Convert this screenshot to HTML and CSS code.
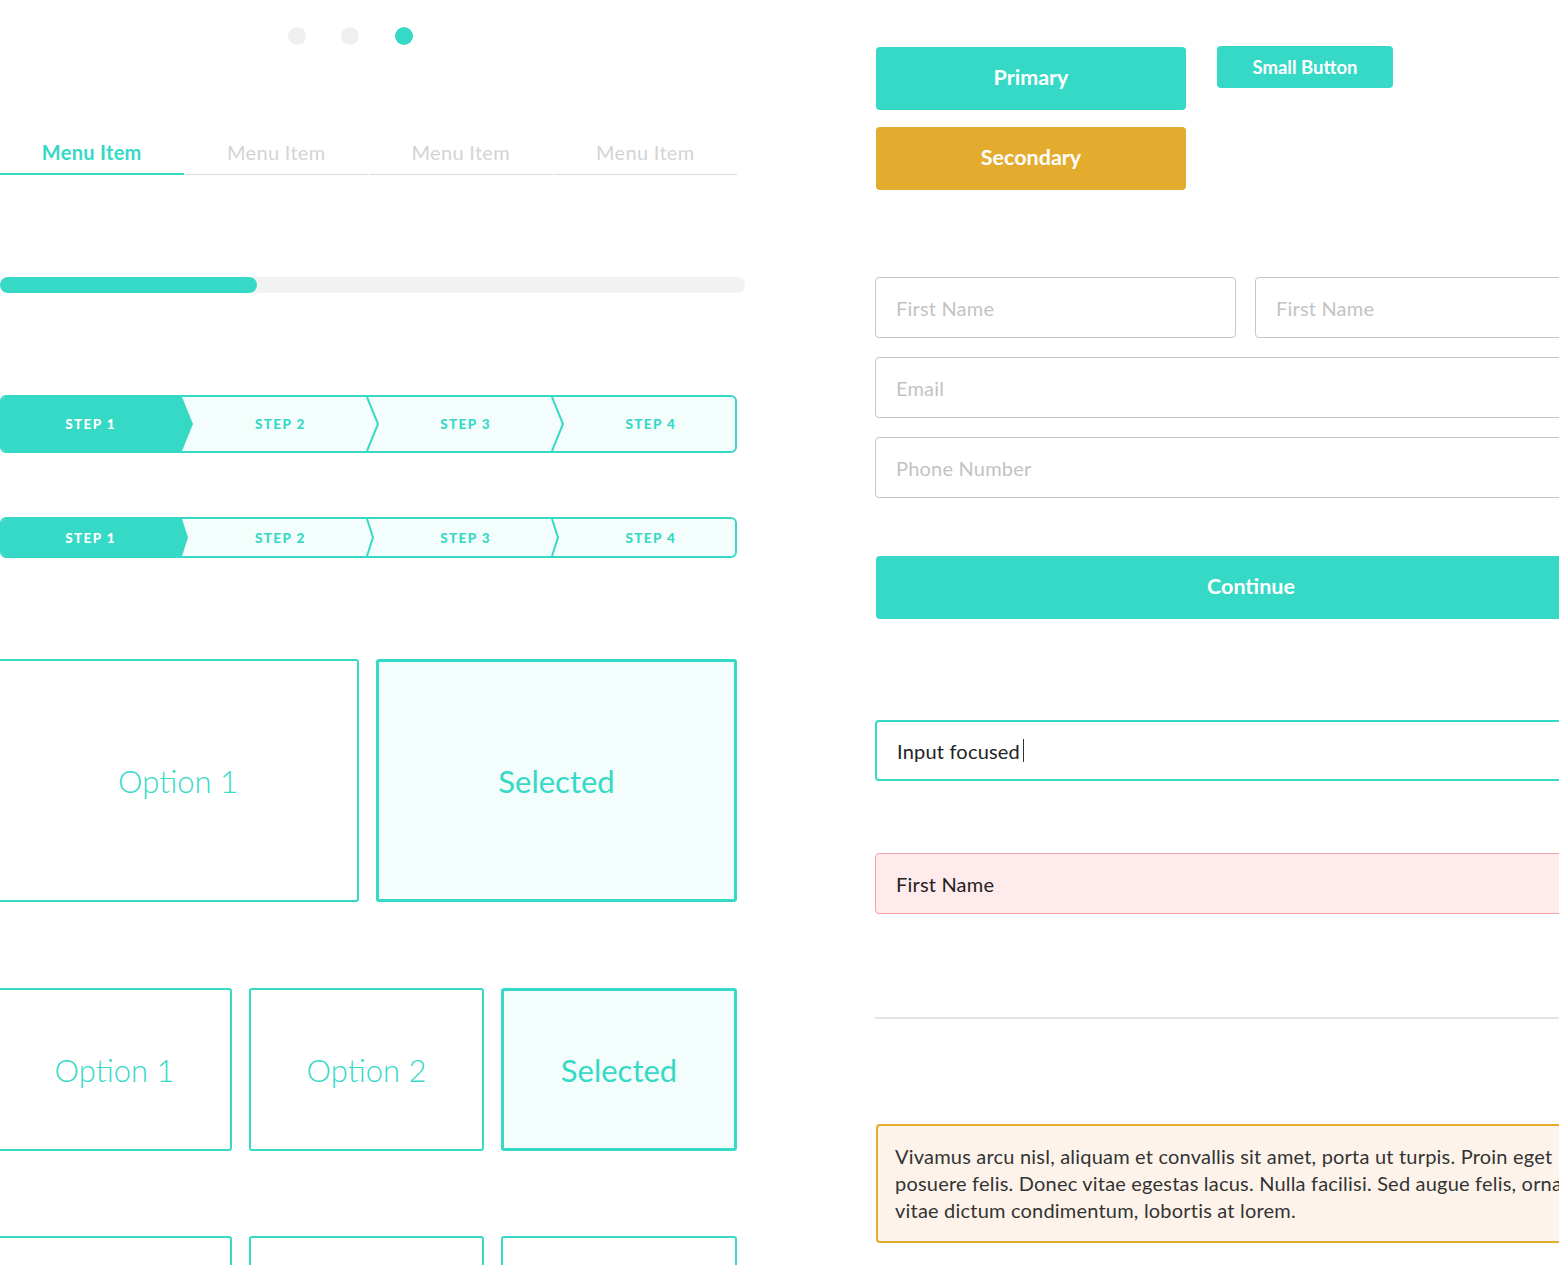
FILE: index.html
```html
<!DOCTYPE html>
<html>
<head>
<meta charset="utf-8">
<link rel="stylesheet" href="styles.css">
</head>
<body>
<div class="canvas">
  <div class="left">
    <div class="dots">
      <span class="dot"></span><span class="dot"></span><span class="dot on"></span>
    </div>
    <nav class="tabs">
      <div class="tab active">Menu Item</div>
      <div class="tab">Menu Item</div>
      <div class="tab">Menu Item</div>
      <div class="tab">Menu Item</div>
    </nav>
    <div class="progress"><div class="fill" style="width:257px"></div></div>

    <div class="steps big">
      <svg class="steps-bg" width="733" height="54" viewBox="0 0 733 54">
        <polygon points="0,0 180,0 191,27 180,54 0,54" fill="#36d9c6"/>
        <polyline points="365,0 376,27 365,54" fill="none" stroke="#36d9c6" stroke-width="2"/>
        <polyline points="550,0 561,27 550,54" fill="none" stroke="#36d9c6" stroke-width="2"/>
      </svg>
      <div class="step current">STEP 1</div>
      <div class="step s2">STEP 2</div>
      <div class="step s3">STEP 3</div>
      <div class="step s4">STEP 4</div>
    </div>

    <div class="steps small">
      <svg class="steps-bg" width="733" height="37" viewBox="0 0 733 37">
        <polygon points="0,0 180,0 186,18.5 180,37 0,37" fill="#36d9c6"/>
        <polyline points="365,0 371,18.5 365,37" fill="none" stroke="#36d9c6" stroke-width="2"/>
        <polyline points="550,0 556,18.5 550,37" fill="none" stroke="#36d9c6" stroke-width="2"/>
      </svg>
      <div class="step current">STEP 1</div>
      <div class="step s2">STEP 2</div>
      <div class="step s3">STEP 3</div>
      <div class="step s4">STEP 4</div>
    </div>

    <div class="options two">
      <div class="option">Option 1</div>
      <div class="option selected">Selected</div>
    </div>

    <div class="options three">
      <div class="option">Option 1</div>
      <div class="option">Option 2</div>
      <div class="option selected">Selected</div>
    </div>

    <div class="options three last">
      <div class="option"></div>
      <div class="option"></div>
      <div class="option"></div>
    </div>
  </div>

  <div class="right">
    <div class="buttons">
      <div class="btn-col">
        <button class="btn primary">Primary</button>
        <button class="btn secondary">Secondary</button>
      </div>
      <button class="btn small-btn">Small Button</button>
    </div>

    <div class="form">
      <div class="row-two">
        <div class="input placeholder">First Name</div>
        <div class="input placeholder">First Name</div>
      </div>
      <div class="input placeholder">Email</div>
      <div class="input placeholder">Phone Number</div>
    </div>

    <button class="btn continue">Continue</button>

    <div class="input focused">Input focused<span class="caret"></span></div>

    <div class="input error">First Name</div>

    <hr class="divider">

    <div class="alert">Vivamus arcu nisl, aliquam et convallis sit amet, porta ut turpis. Proin eget<br>posuere felis. Donec vitae egestas lacus. Nulla facilisi. Sed augue felis, ornare in<br>vitae dictum condimentum, lobortis at lorem.</div>
  </div>
</div>
</body>
</html>
```

FILE: styles.css
```css
* { box-sizing: border-box; }

html, body {
  margin: 0;
  padding: 0;
  background: #ffffff;
  overflow: hidden;
}

body {
  font-family: "Lato", "Noto Sans", sans-serif;
  color: #2a2a2a;
  width: 1559px;
  height: 1265px;
}

.canvas {
  display: flex;
  align-items: flex-start;
}

/* ---------- Left column ---------- */
.left {
  width: 745px;
  flex: none;
  display: flex;
  flex-direction: column;
}

.dots {
  display: flex;
  gap: 35px;
  margin: 27px 0 0 288px;
}
.dot {
  width: 18px;
  height: 18px;
  border-radius: 50%;
  background: #f0f0f0;
}
.dot.on { background: #36d9c6; margin-left: 1px; }

.tabs {
  display: flex;
  gap: 1px;
  width: 737px;
  margin-top: 85px;
}
.tab {
  flex: 1;
  height: 45px;
  display: flex;
  align-items: center;
  justify-content: center;
  font-size: 20px;
  letter-spacing: 0.3px;
  font-weight: 400;
  color: #d4d4d4;
  border-bottom: 1px solid #dcdcdc;
}
.tab.active {
  color: #36d9c6;
  font-weight: 700;
  border-bottom: 2px solid #36d9c6;
  padding-top: 1px;
}

.progress {
  margin-top: 102px;
  height: 16px;
  width: 745px;
  background: #f2f2f2;
  border-radius: 8px;
  overflow: hidden;
}
.progress .fill {
  height: 100%;
  background: #36d9c6;
  border-radius: 0 8px 8px 0;
}

.steps {
  position: relative;
  display: flex;
  width: 737px;
  border: 2px solid #36d9c6;
  border-radius: 6px;
  background: #f3fdfb;
  overflow: hidden;
}
.steps.big { height: 58px; margin-top: 102px; }
.steps.small { height: 41px; margin-top: 64px; }

.steps-bg {
  position: absolute;
  left: 0;
  top: 0;
}
.step {
  position: relative;
  flex: 0 0 25%;
  display: flex;
  align-items: center;
  justify-content: center;
  padding-left: 5px;
  font-size: 13.5px;
  font-weight: 900;
  letter-spacing: 1.4px;
  color: #36d9c6;
}
.step.current { color: #ffffff; padding-left: 0; padding-right: 6px; }
.step.s2 { padding-left: 7px; }
.step.s3 { padding-left: 11px; }
.step.s4 { padding-left: 15px; }

.options {
  display: grid;
  gap: 17px;
  margin-left: -3px;
  width: 740px;
}
.options.two {
  grid-template-columns: 362px 361px;
  height: 243px;
  margin-top: 101px;
}
.options.three {
  grid-template-columns: 235px 235px 236px;
  height: 163px;
  margin-top: 86px;
}
.options.three.last { margin-top: 85px; }

.option {
  border: 2px solid #36d9c6;
  border-radius: 3px;
  display: flex;
  align-items: center;
  justify-content: center;
  font-size: 31px;
  font-weight: 300;
  color: #36d9c6;
  background: #ffffff;
}
.option.selected {
  border-width: 3px;
  background: #f3fdfb;
  font-weight: 400;
}

/* ---------- Right column ---------- */
.right {
  width: 751px;
  flex: none;
  margin-left: 130px;
  display: flex;
  flex-direction: column;
}

.btn {
  font-family: "Lato", "Noto Sans", sans-serif;
  border: none;
  border-radius: 4px;
  color: #ffffff;
  font-weight: 700;
  display: flex;
  align-items: center;
  justify-content: center;
  padding: 0 0 3px 0;
  margin: 0;
}

.buttons {
  display: flex;
  align-items: flex-start;
  gap: 31px;
  margin-top: 46px;
}
.btn-col {
  display: flex;
  flex-direction: column;
  gap: 17px;
  padding-top: 1px;
  margin-left: 1px;
}
.btn.primary {
  width: 310px;
  height: 63px;
  font-size: 21.5px;
  background: #36d9c6;
}
.btn.secondary {
  width: 310px;
  height: 63px;
  font-size: 21.5px;
  background: #e4ac2f;
}
.btn.small-btn {
  width: 176px;
  height: 42px;
  font-size: 18.5px;
  background: #36d9c6;
  padding-bottom: 1px;
}

.form {
  display: flex;
  flex-direction: column;
  gap: 19px;
  margin-top: 87px;
}
.row-two {
  display: flex;
  gap: 19px;
}
.row-two .input:first-child { width: 361px; flex: none; }
.row-two .input:last-child { flex: 1; }

.input {
  height: 61px;
  border: 1.5px solid #c6c6c6;
  border-radius: 4px;
  display: flex;
  align-items: center;
  padding: 0 0 0 20px;
  font-size: 20px;
  letter-spacing: 0.2px;
  color: #222222;
}
.input.placeholder {
  color: #c3c3c3;
  font-weight: 400;
}

.btn.continue {
  margin-top: 58px;
  margin-left: 1px;
  width: 750px;
  height: 63px;
  font-size: 21.5px;
  background: #36d9c6;
}

.input.focused {
  margin-top: 101px;
  border: 2px solid #36d9c6;
  padding-left: 20px;
}
.caret {
  display: inline-block;
  width: 1px;
  height: 23px;
  background: #333333;
  margin-left: 3px;
}

.input.error {
  margin-top: 72px;
  border: 1.5px solid #f2a3a3;
  background: #ffebeb;
}

.divider {
  margin: 103px 0 0 0;
  height: 2px;
  border: none;
  background: #e3e3e3;
}

.alert {
  margin-top: 105px;
  margin-left: 1px;
  height: 119px;
  border: 2px solid #e4ac2f;
  border-radius: 4px;
  background: #fdf3ea;
  padding: 17px 0 0 17px;
  font-size: 20px;
  letter-spacing: 0.2px;
  line-height: 27px;
  color: #333333;
  white-space: nowrap;
  overflow: hidden;
}
```
